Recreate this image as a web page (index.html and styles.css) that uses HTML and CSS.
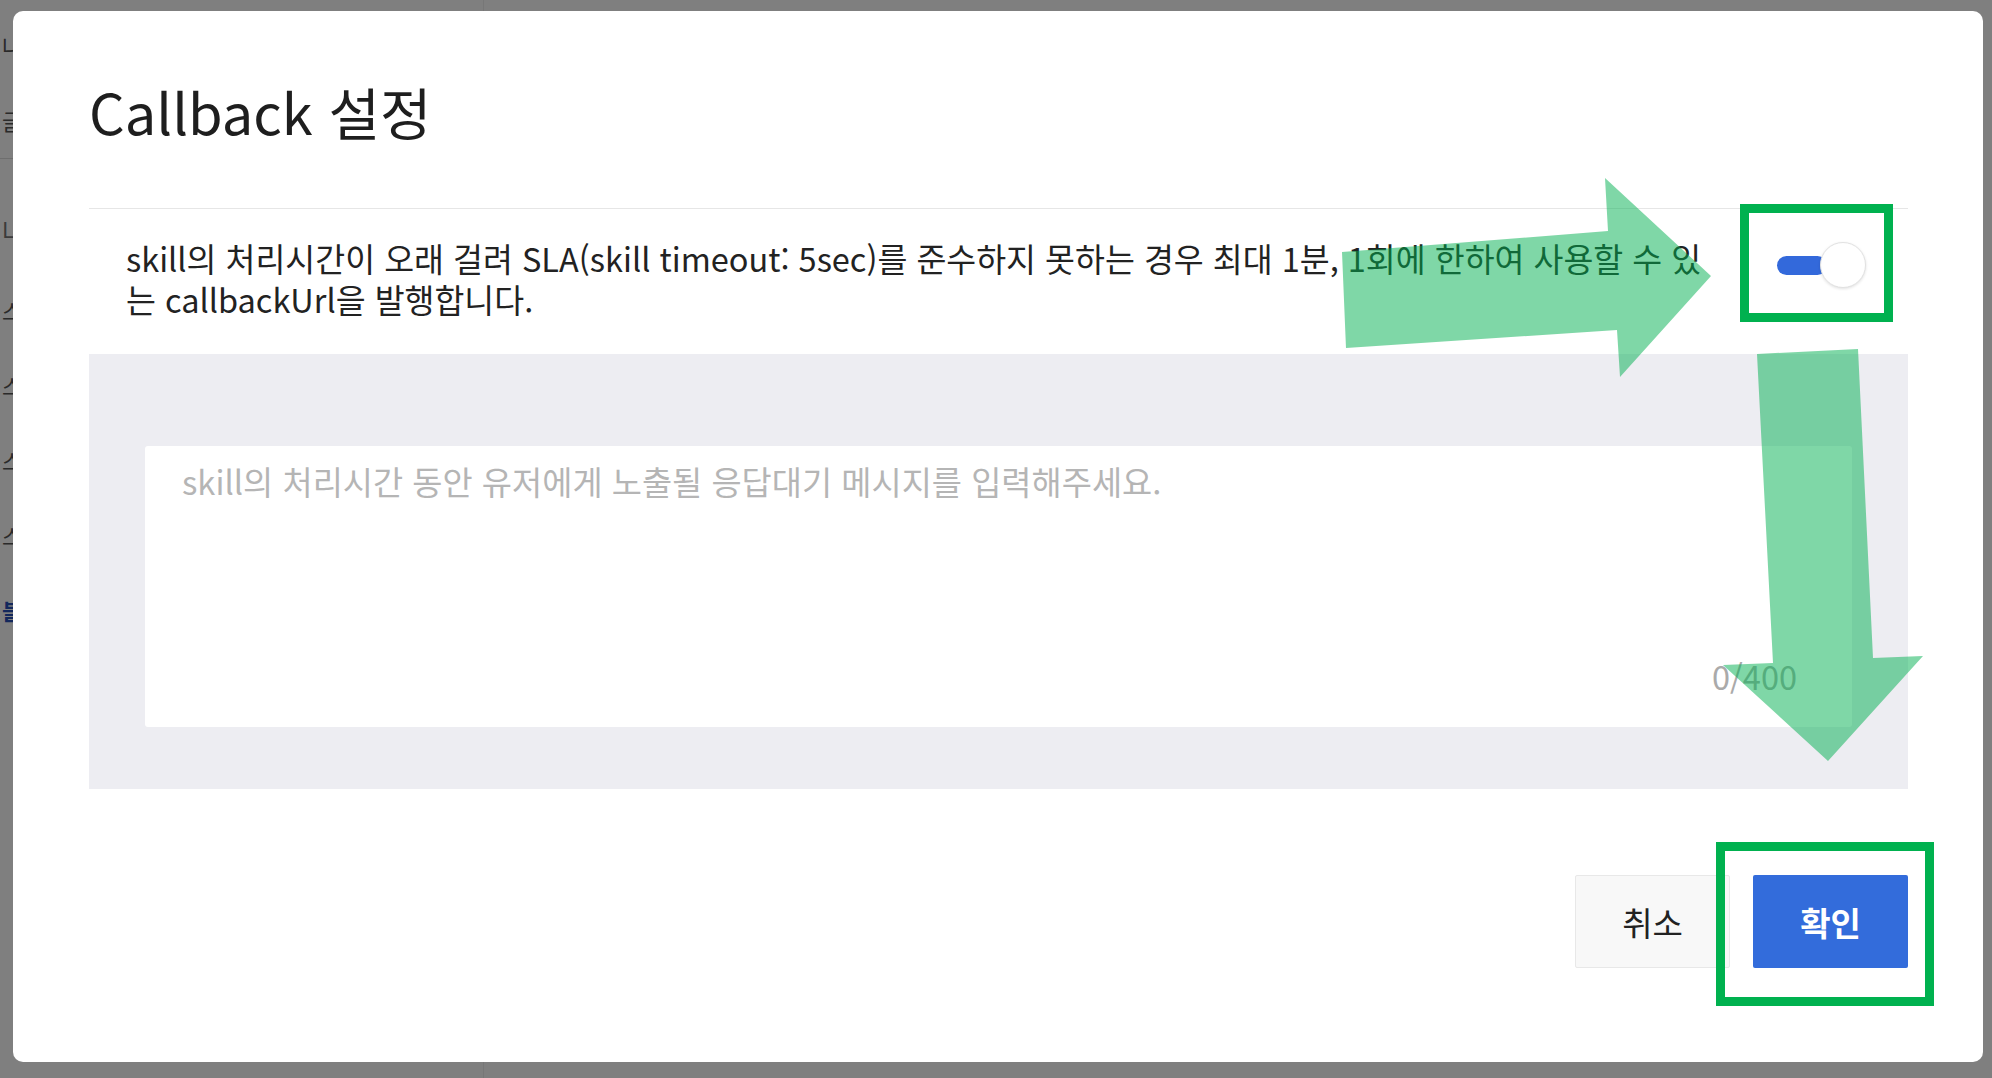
FILE: index.html
```html
<!DOCTYPE html>
<html lang="ko">
<head>
    <meta charset="UTF-8">
    <meta name="viewport" content="width=device-width, initial-scale=1.0">
    <title>Callback 설정</title>
    <link rel="stylesheet" href="styles.css">
</head>
<body>
    <div class="page">
        <aside class="side">
            <div class="side-top">
                <div class="side-item">나의 봇</div>
                <div class="side-item">글로벌</div>
            </div>
            <div class="side-title">L 스킬</div>
            <div class="side-item">스킬 목록</div>
            <div class="side-item">스킬 추가</div>
            <div class="side-item">스킬 설정</div>
            <div class="side-item">스킬 로그</div>
            <div class="side-item side-active">블록 연결</div>
        </aside>
        <main class="page-body"></main>
    </div>

    <div class="dim">
        <div class="modal">
            <h1 class="modal-title">Callback 설정</h1>

            <div class="callback-row">
                <p class="callback-desc">skill의 처리시간이 오래 걸려 SLA(skill timeout: 5sec)를 준수하지 못하는 경우 최대 1분, 1회에 한하여 사용할 수 있는 callbackUrl을 발행합니다.</p>
                <label class="switch">
                    <span class="switch-track"></span>
                    <span class="switch-knob"></span>
                </label>
            </div>

            <div class="message-box">
                <div class="message-field">
                    <textarea placeholder="skill의 처리시간 동안 유저에게 노출될 응답대기 메시지를 입력해주세요."></textarea>
                    <div class="message-count">0/400</div>
                </div>
            </div>

            <div class="modal-footer">
                <button class="btn btn-cancel">취소</button>
                <button class="btn btn-ok">확인</button>
            </div>
        </div>
    </div>

    <!-- annotation marks drawn over the screenshot -->
    <svg class="marks" width="1992" height="1078" viewBox="0 0 1992 1078">
        <polygon class="mark-arrow" points="1342,252 1608,231 1605,178 1711,276 1620,377 1617,330 1346,348"/>
        <polygon class="mark-arrow" points="1757,354 1858,349 1873,658 1923,656 1828,761 1723,665 1773,663"/>
        <rect class="mark-box" x="1744.5" y="208.5" width="144" height="109"/>
        <rect class="mark-box" x="1720.5" y="846.5" width="209" height="155"/>
    </svg>
</body>
</html>
```

FILE: styles.css
```css
* {
    box-sizing: border-box;
}

body {
    margin: 0;
    padding: 0;
    background-color: #fff;
    font-family: "Noto Sans CJK KR", "Noto Sans", sans-serif;
    color: #222;
    width: 1992px;
    height: 1078px;
    overflow: hidden;
}

/* page underneath the dialog */
.page {
    display: flex;
    height: 100%;
}

.side {
    width: 484px;
    border-right: 1px solid #eee;
    overflow: hidden;
}

.side-top {
    padding-top: 8px;
    border-bottom: 1px solid #ddd;
}

.side-item,
.side-title {
    height: 75px;
    line-height: 75px;
    font-size: 22px;
    color: #555;
    white-space: nowrap;
    padding-left: 2px;
}

.side-title {
    margin-top: 32px;
    margin-bottom: 7px;
    color: #777;
}

.side-active {
    color: #2750b8;
    font-weight: bold;
}

.page-body {
    flex: 1;
}

/* dialog */
.dim {
    position: fixed;
    top: 0;
    left: 0;
    right: 0;
    bottom: 0;
    background: rgba(0, 0, 0, 0.5);
    display: flex;
    padding: 11px 9px 16px 13px;
}

.modal {
    flex: 1;
    background-color: #fff;
    border-radius: 10px;
    padding: 60px 75px 94px 76px;
    display: flex;
    flex-direction: column;
}

.modal-title {
    margin: 0 0 57px;
    font-size: 56px;
    line-height: 80px;
    font-weight: 400;
    color: #1e1e1e;
}

.callback-row {
    display: flex;
    align-items: flex-start;
    border-top: 1px solid #e6e6e6;
    padding: 28px 42px 35px 37px;
}

.callback-desc {
    flex: 1;
    margin: 0 58px 0 0;
    font-size: 32.5px;
    line-height: 41px;
    color: #222;
}

.switch {
    display: flex;
    align-items: center;
    margin-top: 5px;
    cursor: pointer;
}

.switch-track {
    width: 50px;
    height: 19px;
    border-radius: 10px;
    background-color: #3369db;
}

.switch-knob {
    width: 46px;
    height: 46px;
    margin-left: -7px;
    border-radius: 50%;
    background-color: #fff;
    border: 1px solid #e2e2e2;
    box-shadow: 0 1px 3px rgba(0, 0, 0, 0.12);
}

.message-box {
    background-color: #ededf2;
    padding: 92px 56px 62px;
}

.message-field {
    height: 281px;
    background-color: #fff;
    border-radius: 3px;
    display: flex;
    flex-direction: column;
}

.message-field textarea {
    flex: 1;
    border: none;
    outline: none;
    resize: none;
    background: transparent;
    padding: 11px 37px 0;
    font-family: inherit;
    font-size: 32.8px;
    line-height: 1.45;
    color: #222;
}

.message-field textarea::placeholder {
    color: #b5b5b5;
}

.message-count {
    text-align: right;
    padding: 0 55px 30px 0;
    font-size: 32.5px;
    line-height: 43px;
    color: #aaa;
}

.modal-footer {
    margin-top: 86px;
    display: flex;
    justify-content: flex-end;
    gap: 23px;
}

.btn {
    width: 155px;
    height: 93px;
    font-family: inherit;
    font-size: 33px;
    border-radius: 2px;
    cursor: pointer;
}

.btn-cancel {
    background-color: #f8f8f8;
    border: 1px solid #e8e8e8;
    color: #222;
}

.btn-ok {
    background-color: #336cdb;
    border: none;
    color: #fff;
    font-weight: bold;
}

/* annotations */
.marks {
    position: absolute;
    top: 0;
    left: 0;
    pointer-events: none;
}

.mark-arrow {
    fill: rgba(0, 176, 80, 0.5);
}

.mark-box {
    fill: none;
    stroke: #00b14f;
    stroke-width: 9;
}
```
